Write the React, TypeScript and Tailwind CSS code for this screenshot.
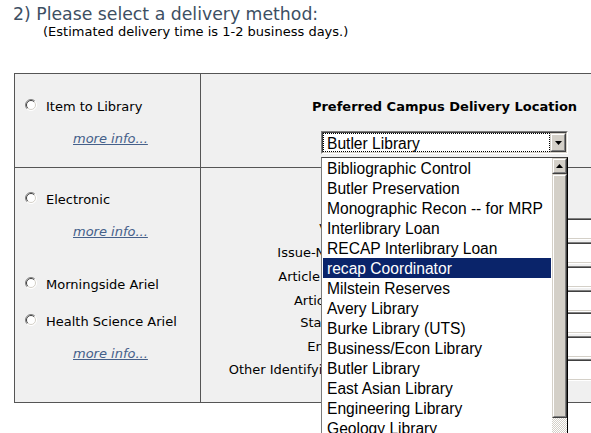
import React from "react";

function Radio() {
  return (
    <svg width="12" height="12" viewBox="0 0 12 12" className="shrink-0 mt-[1px]">
      <circle cx="6" cy="6" r="5.5" fill="#fff" />
      <path d="M2.1 9.9 A5.5 5.5 0 0 1 9.9 2.1" stroke="#808080" fill="none" />
      <path d="M2.8 9.2 A4.5 4.5 0 0 1 9.2 2.8" stroke="#404040" fill="none" />
      <path d="M9.9 2.1 A5.5 5.5 0 0 1 2.1 9.9" stroke="#ffffff" fill="none" />
      <path d="M9.2 2.8 A4.5 4.5 0 0 1 2.8 9.2" stroke="#d4d0c8" fill="none" />
    </svg>
  );
}

function MoreInfo({ className = "" }: { className?: string }) {
  return (
    <div className={"pl-[48px] leading-[18px] " + className}>
      <a className="italic underline text-[#45608a] cursor-pointer">more info...</a>
    </div>
  );
}

function Option({ label, className = "" }: { label: string; className?: string }) {
  return (
    <div className={"flex items-start gap-[9px] leading-[18px] " + className}>
      <Radio />
      <span>{label}</span>
    </div>
  );
}

const items = [
  "Bibliographic Control",
  "Butler Preservation",
  "Monographic Recon -- for MRP",
  "Interlibrary Loan",
  "RECAP Interlibrary Loan",
  "recap Coordinator",
  "Milstein Reserves",
  "Avery Library",
  "Burke Library (UTS)",
  "Business/Econ Library",
  "Butler Library",
  "East Asian Library",
  "Engineering Library",
  "Geology Library",
  "Health Sciences Library",
  "Journalism Library",
];

const fields: { label: string; h: string }[] = [
  { label: "Volume:", h: "h-[24px]" },
  { label: "Issue-Number:", h: "h-[24px]" },
  { label: "Article Author:", h: "h-[24px]" },
  { label: "Article Title:", h: "h-[22px]" },
  { label: "Start Page:", h: "h-[24px]" },
  { label: "End Page:", h: "h-[23px]" },
  { label: "Other Identifying Info:", h: "h-[23px]" },
];

function Raised({ children, className = "" }: { children?: React.ReactNode; className?: string }) {
  return (
    <div className={"border border-t-[#d4d0c8] border-l-[#d4d0c8] border-b-[#404040] border-r-[#404040] " + className}>
      <div className="w-full h-full border border-t-white border-l-white border-b-[#808080] border-r-[#808080] bg-[#d4d0c8] flex items-center justify-center">
        {children}
      </div>
    </div>
  );
}

export default function App() {
  return (
    <div className="w-[591px] h-[433px] overflow-hidden bg-white relative font-['DejaVu_Sans',Verdana,sans-serif] text-[13px] text-black">
      <div className="pl-[13px] pt-[4px] text-[17.3px] leading-[20px] text-[#3d4f63]">
        2) Please select a delivery method:
      </div>
      <div className="pl-[43px] leading-[16px]">(Estimated delivery time is 1-2 business days.)</div>

      <div className="ml-[14px] mt-[33px] w-[675px] grid grid-cols-[185px_487px] grid-rows-[93px_234px] gap-px p-px bg-[#555555]">
        {/* row 1 left */}
        <div className="bg-[#f0f0f0] pt-[24px] pl-[10px]">
          <Option label="Item to Library" />
          <MoreInfo className="mt-[14px]" />
        </div>

        {/* row 1 right */}
        <div className="bg-[#f0f0f0] pt-[24px] flex flex-col items-center">
          <div className="font-bold leading-[18px]">Preferred Campus Delivery Location</div>
          <div className="relative mt-[15px] w-[247px] h-[23px]">
            <div className="w-full h-full border border-t-[#808080] border-l-[#808080] border-b-white border-r-white">
              <div className="w-full h-full border border-t-[#404040] border-l-[#404040] border-b-[#d4d0c8] border-r-[#d4d0c8] bg-white flex">
                <div className="flex-1 border border-dotted border-black pl-[3px] font-['Liberation_Sans',Arial,sans-serif] text-[15.6px] leading-[19px]">
                  Butler Library
                </div>
                <Raised className="w-[16px] h-full">
                  <svg width="7" height="4" viewBox="0 0 7 4">
                    <path d="M0 0 H7 L3.5 4 Z" fill="#000" />
                  </svg>
                </Raised>
              </div>
            </div>

            {/* open dropdown list */}
            <div className="absolute z-10 left-0 top-[26px] w-[247px] h-[300px] bg-white border-l border-t border-r border-l-[#7a7a7a] border-t-[#404040] border-r-black flex">
              <div className="pl-px w-[229px] font-['Liberation_Sans',Arial,sans-serif] text-[15.6px] leading-[21px]">
                {items.map((it) => (
                  <div
                    key={it}
                    className={
                      "h-[20px] pl-[4px] whitespace-nowrap " +
                      (it === "recap Coordinator" ? "bg-[#0a246a] text-white" : "text-black")
                    }
                  >
                    {it}
                  </div>
                ))}
              </div>
              <div className="ml-px w-[15px] flex flex-col">
                <Raised className="h-[16px] w-full">
                  <svg width="7" height="4" viewBox="0 0 7 4">
                    <path d="M0 4 H7 L3.5 0 Z" fill="#000" />
                  </svg>
                </Raised>
                <Raised className="h-[244px] w-full" />
                <div className="flex-1 bg-[repeating-conic-gradient(#d4d0c8_0_25%,#ffffff_0_50%)] bg-[length:2px_2px]" />
              </div>
            </div>
          </div>
        </div>

        {/* row 2 left */}
        <div className="bg-[#f0f0f0] pt-[23px] pl-[10px]">
          <Option label="Electronic" />
          <MoreInfo className="mt-[14px]" />
          <Option label="Morningside Ariel" className="mt-[35px]" />
          <Option label="Health Science Ariel" className="mt-[19px]" />
          <MoreInfo className="mt-[14px]" />
        </div>

        {/* row 2 right */}
        <div className="bg-[#f0f0f0] pt-[50px]">
          {fields.map((f) => (
            <div key={f.label} className={"flex items-start " + f.h}>
              <div className="w-[171px] text-right leading-[22px] whitespace-nowrap">{f.label}</div>
              <div className="ml-[3px] w-[300px] h-[22px] border border-t-[#808080] border-l-[#808080] border-b-white border-r-white">
                <div className="w-full h-full bg-white border border-t-[#404040] border-l-[#404040] border-b-[#d4d0c8] border-r-[#d4d0c8]" />
              </div>
            </div>
          ))}
        </div>
      </div>
    </div>
  );
}
